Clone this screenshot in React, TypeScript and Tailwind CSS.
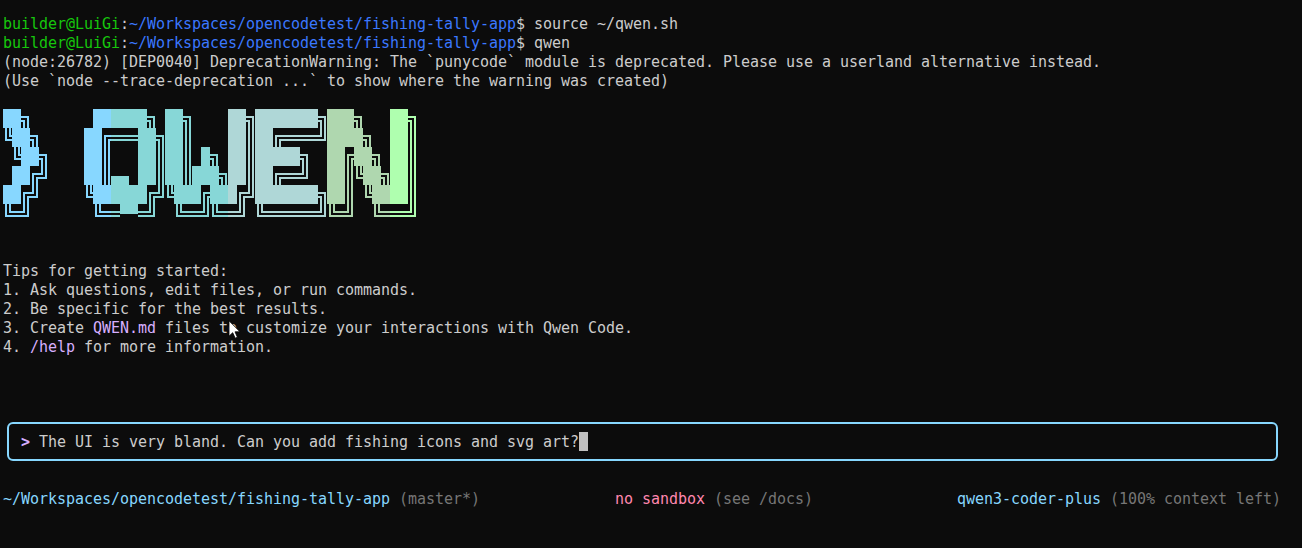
import React from "react";

const ART = [
  "██╗       ██████╗ ██╗    ██╗███████╗███╗   ██╗",
  "╚██╗     ██╔═══██╗██║    ██║██╔════╝████╗  ██║",
  " ╚██╗    ██║   ██║██║ █╗ ██║█████╗  ██╔██╗ ██║",
  " ██╔╝    ██║▄▄ ██║██║███╗██║██╔══╝  ██║╚██╗██║",
  "██╔╝     ╚██████╔╝╚███╔███╔╝███████╗██║ ╚████║",
  "╚═╝       ╚══▀▀═╝  ╚══╝╚══╝ ╚══════╝╚═╝  ╚═══╝",
];

const colAt = (c: number) =>
  c < 12 ? "#87d7ff" : c < 25 ? "#87d7d7" : c < 36 ? "#afd7d7" : c < 43 ? "#afd7af" : "#afffaf";

const A = 2, B = 6, P = 7, Q = 11, T = 2;

function cellRects(ch: string): [number, number, number, number][] {
  switch (ch) {
    case "█": return [[0, 0, 9, 19]];
    case "▄": return [[0, 10, 9, 9]];
    case "▀": return [[0, 0, 9, 10]];
    case "║": return [[A, 0, T, 19], [B, 0, T, 19]];
    case "═": return [[0, P, 9, T], [0, Q, 9, T]];
    case "╗": return [[0, P, B + T, T], [B, P, T, 19 - P], [0, Q, A + T, T], [A, Q, T, 19 - Q]];
    case "╔": return [[A, P, 9 - A, T], [A, P, T, 19 - P], [B, Q, 9 - B, T], [B, Q, T, 19 - Q]];
    case "╚": return [[A, 0, T, Q + T], [A, Q, 9 - A, T], [B, 0, T, P + T], [B, P, 9 - B, T]];
    case "╝": return [[B, 0, T, Q + T], [0, Q, B + T, T], [A, 0, T, P + T], [0, P, A + T, T]];
    default: return [];
  }
}

function Logo() {
  return (
    <svg width={414} height={114} viewBox="0 0 414 114" shapeRendering="crispEdges" className="block">
      {ART.map((row, r) =>
        Array.from(row).map((ch, c) =>
          cellRects(ch).map(([x, y, w, h], i) => (
            <rect key={`${r}-${c}-${i}`} x={c * 9 + x} y={r * 19 + y} width={w} height={h} fill={colAt(c)} />
          ))
        )
      )}
    </svg>
  );
}

function Prompt({ cmd }: { cmd: string }) {
  return (
    <div className="h-[19px]">
      <span className="text-[#16c60c]">builder@LuiGi</span>
      <span>:</span>
      <span className="text-[#3b78ff]">~/Workspaces/opencodetest/fishing-tally-app</span>
      <span>$ {cmd}</span>
    </div>
  );
}

function Line({ children }: { children?: React.ReactNode }) {
  return <div className="h-[19px]">{children}</div>;
}

export default function App() {
  return (
    <div className="relative h-[548px] w-[1302px] overflow-hidden bg-[#0c0c0c] pl-[3px] pt-[15px] font-['DejaVu_Sans_Mono',monospace] text-[15px] leading-[19px] tracking-[-0.03px] whitespace-pre text-[#cccccc]">
      <Prompt cmd="source ~/qwen.sh" />
      <Prompt cmd="qwen" />
      <Line>(node:26782) [DEP0040] DeprecationWarning: The `punycode` module is deprecated. Please use a userland alternative instead.</Line>
      <Line>(Use `node --trace-deprecation ...` to show where the warning was created)</Line>
      <div className="h-[18px]" />
      <Logo />
      <div className="h-[39px]" />
      <Line>Tips for getting started:</Line>
      <Line>1. Ask questions, edit files, or run commands.</Line>
      <Line>2. Be specific for the best results.</Line>
      <Line>
        3. Create <span className="text-[#d7afff]">QWEN.md</span> files to customize your interactions with Qwen Code.
      </Line>
      <Line>
        4. <span className="text-[#d7afff]">/help</span> for more information.
      </Line>
      <div className="h-[65px]" />
      <div className="ml-[4px] flex h-[39px] w-[1271px] items-start rounded-[6px] border-2 border-[#87d7ff] pl-[12px] pt-[8px]">
        <span className="pt-[1px] font-bold text-[#d7afff]">&gt;</span>
        <span className="ml-[9px] pt-[1px]">The UI is very bland. Can you add fishing icons and svg art?</span>
        <span className="h-[19px] w-[9px] bg-[#c0c0c0]" />
      </div>
      <div className="h-[29px]" />
      <div className="grid h-[19px] grid-cols-[612px_342px_1fr]">
        <div>
          <span className="text-[#87d7ff]">~/Workspaces/opencodetest/fishing-tally-app</span>
          <span className="text-[#767676]"> (master*)</span>
        </div>
        <div>
          <span className="text-[#ff87af]">no sandbox</span>
          <span className="text-[#767676]"> (see /docs)</span>
        </div>
        <div>
          <span className="text-[#87d7ff]">qwen3-coder-plus</span>
          <span className="text-[#767676]"> (100% context left)</span>
        </div>
      </div>
      <svg className="absolute left-[228px] top-[320px]" width="13" height="19" viewBox="0 0 13 19">
        <path d="M1 0.8V16.2L4.7 12.7L7.2 18.2L9.4 17.2L7 11.8H12Z" fill="#ffffff" stroke="#000000" strokeWidth="0.8" />
      </svg>
    </div>
  );
}
